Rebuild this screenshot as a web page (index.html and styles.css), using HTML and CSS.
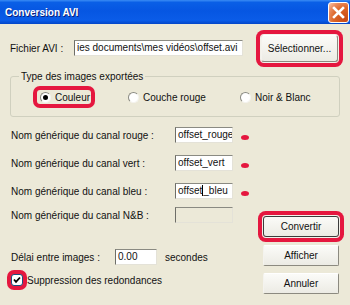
FILE: index.html
```html
<!DOCTYPE html>
<html lang="fr">
<head>
    <meta charset="UTF-8" />
    <title>Conversion AVI</title>
    <link rel="stylesheet" href="styles.css">
</head>
<body>
<div class="window">
    <div class="titlebar">
        <span class="title">Conversion AVI</span>
        <span class="close">
            <svg width="13" height="13" viewBox="0 0 13 13">
                <path d="M2 2 L11 11 M11 2 L2 11" stroke="#fff" stroke-width="2.6" stroke-linecap="square"/>
            </svg>
        </span>
    </div>

    <div class="content">
        <!-- fichier source -->
        <div class="file-row">
            <span class="file-label">Fichier AVI :</span>
            <div class="field file-field">ies documents\mes vidéos\offset.avi</div>
            <button class="btn btn-select mark">Sélectionner...</button>
        </div>

        <!-- type d'export -->
        <fieldset class="group">
            <legend>Type des images exportées</legend>
            <div class="radios">
                <div class="radio radio-1 mark"><span class="dot checked"></span>Couleur</div>
                <div class="radio radio-2"><span class="dot"></span>Couche rouge</div>
                <div class="radio radio-3"><span class="dot"></span>Noir &amp; Blanc</div>
            </div>
        </fieldset>

        <div class="lower">
            <div class="left">
                <div class="row row-rouge">
                    <span class="row-label">Nom générique du canal rouge :</span>
                    <div class="field name-field">offset_rouge</div>
                    <span class="pin"></span>
                </div>
                <div class="row row-vert">
                    <span class="row-label">Nom générique du canal vert :</span>
                    <div class="field name-field">offset_vert</div>
                    <span class="pin"></span>
                </div>
                <div class="row row-bleu">
                    <span class="row-label">Nom générique du canal bleu :</span>
                    <div class="field name-field">offset<span class="caret"></span>_bleu</div>
                    <span class="pin"></span>
                </div>
                <div class="row row-nb">
                    <span class="row-label">Nom générique du canal N&amp;B :</span>
                    <div class="field name-field disabled"></div>
                </div>
                <div class="row row-delai">
                    <span class="delai-label">Délai entre images :</span>
                    <div class="field delai-field">0.00</div>
                    <span class="unit">secondes</span>
                </div>
                <div class="row row-check">
                    <span class="check mark">
                        <svg width="10" height="10" viewBox="0 0 10 10">
                            <path d="M2 4.5 L4 6.8 L8 2.5" fill="none" stroke="#000" stroke-width="1.8"/>
                        </svg>
                    </span>
                    <span>Suppression des redondances</span>
                </div>
            </div>

            <div class="right">
                <button class="btn btn-convert mark default">Convertir</button>
                <button class="btn btn-show">Afficher</button>
                <button class="btn btn-cancel">Annuler</button>
            </div>
        </div>
    </div>
</div>
</body>
</html>
```

FILE: styles.css
```css
body {
    margin: 0;
    font-family: "Liberation Sans", Arial, sans-serif;
    font-size: 10px;
    color: #111;
    background: #ece9d8;
}
.window {
    width: 350px;
    height: 305px;
    overflow: hidden;
    background: #ece9d8;
}
.titlebar {
    height: 24px;
    display: flex;
    align-items: center;
    justify-content: space-between;
    padding: 0 1px 0 5px;
    background: linear-gradient(#3a8cf5 0%, #0a5fe6 10%, #0656e2 45%, #0a5ce8 85%, #0346c8 100%);
}
.title {
    color: #fff;
    font-weight: bold;
    font-size: 10px;
    text-shadow: 1px 1px 0 #0a1f7a;
}
.close {
    width: 19px;
    height: 19px;
    display: flex;
    align-items: center;
    justify-content: center;
    border: 1px solid #fff;
    border-radius: 3px;
    background: radial-gradient(circle at 85% 85%, #c84a14 0%, #dc6527 50%, #e98a5c 75%, #f7c8b0 100%);
}
.content {
    padding: 0 10px;
}

/* ligne fichier */
.file-row {
    height: 28px;
    margin-top: 10px;
    display: flex;
    align-items: center;
}
.file-label {
    width: 64px;
}
.field {
    box-sizing: border-box;
    height: 16px;
    padding: 0 2px;
    line-height: 14px;
    white-space: nowrap;
    overflow: hidden;
    background: #fff;
    border: 1px solid;
    border-color: #8a8a82 #e4e2d8 #e4e2d8 #6e6e68;
}
.file-field {
    width: 169px;
}
.btn {
    box-sizing: border-box;
    height: 21px;
    width: 76px;
    padding: 0;
    font-family: inherit;
    font-size: 10px;
    color: #111;
    background: linear-gradient(#fbfbf8, #ecebe4);
    border: 1px solid;
    border-color: #fff #8c8a80 #8c8a80 #f4f3ee;
    border-radius: 2px;
}
.btn.default {
    border-color: #3c3c3c;
}
.btn-select {
    width: 77px;
    height: 27px;
    margin-left: 18px;
}
.mark {
    box-shadow: 0 0 0 1px #f2f1ea, 0 0 0 5px #e5173f;
    border-radius: 3px;
}

/* groupe radio */
.group {
    box-sizing: border-box;
    width: 330px;
    margin: 8px 0 0 0;
    padding: 7px 0 12px 0;
    border: 1px solid #d0d0bf;
    border-radius: 3px;
    min-width: 0;
}
.group legend {
    margin-left: 8px;
    padding: 0 2px;
    line-height: 13px;
}
.radios {
    display: flex;
    height: 14px;
    align-items: center;
}
.radio {
    box-sizing: border-box;
    display: flex;
    align-items: center;
    height: 14px;
}
.radio-1 {
    margin-left: 26px;
    width: 54px;
    padding-left: 3px;
    box-shadow: 0 0 0 4px #e5173f;
}
.radio-2 {
    margin-left: 37px;
    width: 112px;
}
.dot {
    box-sizing: border-box;
    width: 11px;
    height: 11px;
    margin-right: 4px;
    border-radius: 50%;
    background: #fff;
    border: 1px solid;
    border-color: #8a8a82 #f4f3ee #f4f3ee #8a8a82;
    display: flex;
    align-items: center;
    justify-content: center;
}
.dot.checked::after {
    content: "";
    width: 5px;
    height: 5px;
    border-radius: 50%;
    background: #000;
}

/* partie basse */
.lower {
    display: flex;
}
.left {
    width: 253px;
}
.right {
    display: flex;
    flex-direction: column;
}
.row {
    height: 16px;
    display: flex;
    align-items: center;
}
.row-rouge { margin-top: 10px; }
.row-vert { margin-top: 12px; }
.row-bleu { margin-top: 12px; }
.row-nb { margin-top: 8px; }
.row-delai { margin-top: 26px; }
.row-check { margin-top: 7px; }
.row-label {
    width: 164px;
    padding-left: 1px;
}
.name-field {
    width: 58px;
}
.name-field.disabled {
    background: #ece9d8;
}
.caret {
    display: inline-block;
    width: 1px;
    height: 11px;
    vertical-align: -2px;
    background: #000;
}
.pin {
    width: 8px;
    height: 5px;
    margin: 5px 0 0 8px;
    border-radius: 50%;
    background: #e5173f;
}
.delai-label {
    width: 104px;
    padding-left: 1px;
}
.delai-field {
    width: 42px;
}
.unit {
    margin-left: 8px;
}
.check {
    box-sizing: border-box;
    width: 12px;
    height: 12px;
    margin: 0 4px 0 1px;
    display: flex;
    align-items: center;
    justify-content: center;
    background: #fff;
    border: 1px solid #1c5180;
    box-shadow: 0 0 0 4px #e5173f;
}
.btn-convert {
    margin-top: 99px;
}
.btn-show {
    margin-top: 8px;
}
.btn-cancel {
    margin-top: 7px;
}
```
